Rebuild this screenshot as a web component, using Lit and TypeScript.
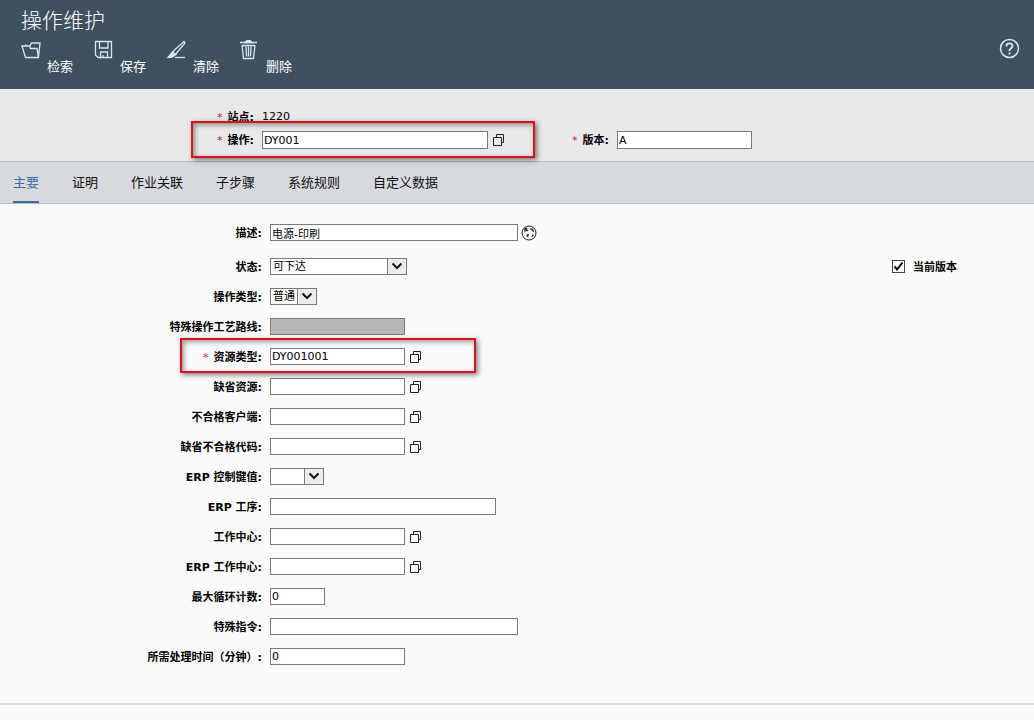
import { LitElement, html, css, svg, nothing, TemplateResult } from "lit";
import { customElement, property } from "lit/decorators.js";

const icons: Record<string, TemplateResult> = {
  open: svg`<path d="M4.500 17.500 1 6h7.500l1 2.500h6.500l1.500 9zM4.500 6 5 4.500M9 6l1.500-3h8.500l-1.500 14"/>`,
  save: svg`<path d="M1.500 1.500h16v16H4l-2.500-2.500zM5.500 1.500v6.500h8.500V1.500M6.500 17.500v-5.500h7v5.500M9 15v2"/>`,
  clear: svg`<path d="M17 1.500 7.500 10 5 13.500l3.500 1L18 3z"/><path d="M5.500 12 9 14.500 5 17 1 17.500z" fill="currentColor"/><path d="M8 17.500h10"/>`,
  remove: svg`<path d="M0 2.500h17M2 5l1.500 13.500h10L15 5M2 5.500h13M6 6.500l.500 10M8.500 6.500v10M11 6.500l-.500 10"/><path d="M5 2.500 7 .500h3l2 2z" fill="currentColor"/>`,
};

const baseText = css`
  .label {
    padding-top: 2px;
    font-weight: bold;
    text-align: right;
    white-space: nowrap;
    line-height: 15px;
  }
  .req {
    color: #c0272d;
    font-weight: normal;
    margin-right: 5px;
  }
`;

@customElement("tool-button")
class ToolButton extends LitElement {
  @property() icon = "";
  @property() label = "";

  static styles = css`
    .tool {
      display: flex;
      gap: 6px;
      height: 34px;
      padding: 0;
      border: 0;
      background: none;
      color: #fff;
      font: 13px/17px "Noto Sans CJK SC", sans-serif;
      cursor: pointer;
    }
    .icon {
      width: 20px;
      height: 20px;
      fill: none;
      stroke: currentColor;
      stroke-width: 1.3;
      color: #d3e6f5;
    }
    .text {
      align-self: flex-end;
    }
  `;

  render() {
    return html`<button class="tool" type="button">
      <svg class="icon" viewBox="0 0 20 20" aria-hidden="true">${icons[this.icon]}</svg>
      <span class="text">${this.label}</span>
    </button>`;
  }
}

@customElement("form-field")
class FormField extends LitElement {
  @property() label = "";
  @property() value = "";
  @property() kind = "input";
  @property() size = "medium";
  @property() suffix = "";
  @property({ type: Boolean }) required = false;
  @property({ type: Boolean }) disabled = false;
  @property({ type: Boolean, reflect: true }) marked = false;

  static styles = [
    baseText,
    css`
      :host {
        display: block;
      }
      .field {
        position: relative;
        display: grid;
        grid-template-columns: var(--label-width, 262px) auto;
        justify-content: start;
        column-gap: 8px;
      }
      .control {
        display: flex;
        align-items: center;
        gap: 5px;
      }
      .box {
        box-sizing: border-box;
        height: var(--control-height, 17px);
        margin: 0;
        padding: 0 1px;
        border: 1px solid #7a7a7a;
        border-radius: 0;
        background: #fff;
        color: #000;
        font: inherit;
        line-height: 15px;
        outline-offset: 0;
      }
      .box:disabled {
        background: #b8b8b8;
        opacity: 1;
      }
      .tiny { width: 47px; }
      .mini { width: 54px; }
      .small { width: 55px; }
      .medium { width: 135px; }
      .large { width: 226px; }
      .wide { width: 248px; }
      .pick {
        display: grid;
      }
      .pick > * {
        grid-area: 1 / 1;
      }
      .select {
        appearance: none;
        width: 100%;
        padding: 0 20px 0 2px;
      }
      .status { width: 137px; }
      .arrow {
        box-sizing: border-box;
        justify-self: end;
        width: 20px;
        height: 17px;
        border: 1px solid #7a7a7a;
        background: #ececec;
        fill: none;
        stroke: #111;
        stroke-width: 2;
        pointer-events: none;
      }
      .aid {
        display: block;
        padding: 0;
        border: 0;
        background: none;
        cursor: pointer;
      }
      .glyph {
        display: block;
        fill: none;
        stroke: #222;
      }
      .globe {
        margin-left: -2px;
      }
      .frame {
        position: absolute;
        inset: var(--frame-inset, -10px auto -8px 180px);
        width: var(--frame-width, 292px);
        border: 2px solid #d8141a;
        box-shadow: 2px 2px 5px rgba(0, 0, 0, 0.5), inset 2px 2px 5px rgba(0, 0, 0, 0.4);
        pointer-events: none;
      }
    `,
  ];

  private renderControl() {
    if (this.kind === "text") return html`<output id="c">${this.value}</output>`;
    if (this.kind === "select")
      return html`<span class="pick ${this.size}">
        <select id="c" class="box select"><option>${this.value}</option></select>
        <svg class="arrow" viewBox="0 0 18 15" aria-hidden="true"><path d="M4.500 4.500 9 9l4.500-4.500" /></svg>
      </span>`;
    return html`<input id="c" class="box ${this.size}" .value=${this.value} ?disabled=${this.disabled} />`;
  }

  private renderSuffix() {
    if (this.suffix === "lookup")
      return html`<button class="aid" type="button" aria-label="${this.label}">
        <svg class="glyph" width="12" height="12" viewBox="0 0 12 12">
          <path d="M.5 3.500h8v8h-8zM3.500 3.500v-3h7v8h-2" />
        </svg>
      </button>`;
    if (this.suffix === "globe")
      return html`<button class="aid globe" type="button" aria-label="${this.label}">
        <svg class="glyph" width="16" height="16" viewBox="0 0 16 16">
          <circle cx="8" cy="8" r="7" />
          <path d="M3 4l2-1.500 1.500.500L6 4.500l1.500 1L6 6.500 5 6 3.500 7zM9.500 3l2 .500 2 3-1.500.500-1-1.500-1.500-.500zM6 9l2 .500-.500 2-1.500 1-.500-2zM11 9.500l2 .500-1.500 2-1-.500z" fill="#333" stroke="none" />
        </svg>
      </button>`;
    return nothing;
  }

  render() {
    return html`<div class="field">
      <label class="label" for="c">${this.required ? html`<span class="req">*</span>` : nothing}${this.label}:</label>
      <div class="control">${this.renderControl()}${this.renderSuffix()}</div>
      ${this.marked ? html`<div class="frame"></div>` : nothing}
    </div>`;
  }
}

interface Field {
  label: string;
  value?: string;
  kind?: string;
  size?: string;
  suffix?: string;
  required?: boolean;
  disabled?: boolean;
  marked?: boolean;
}

const tools = [
  ["open", "检索"],
  ["save", "保存"],
  ["clear", "清除"],
  ["remove", "删除"],
];

const tabs = ["主要", "证明", "作业关联", "子步骤", "系统规则", "自定义数据"];

const fields: Field[] = [
  { label: "操作类型", value: "普通", kind: "select", size: "tiny" },
  { label: "特殊操作工艺路线", disabled: true },
  { label: "资源类型", value: "DY001001", suffix: "lookup", required: true, marked: true },
  { label: "缺省资源", suffix: "lookup" },
  { label: "不合格客户端", suffix: "lookup" },
  { label: "缺省不合格代码", suffix: "lookup" },
  { label: "ERP 控制键值", kind: "select", size: "mini" },
  { label: "ERP 工序", size: "large" },
  { label: "工作中心", suffix: "lookup" },
  { label: "ERP 工作中心", suffix: "lookup" },
  { label: "最大循环计数", value: "0", size: "small" },
  { label: "特殊指令", size: "wide" },
  { label: "所需处理时间（分钟）", value: "0" },
];

@customElement("app-root")
class AppRoot extends LitElement {
  static styles = [
    baseText,
    css`
      :host {
        display: block;
        min-height: 100vh;
        background: #fafafa;
        color: #000;
        font: 11px/17px "DejaVu Sans", "Noto Sans CJK SC", sans-serif;
      }
      .top {
        display: flex;
        justify-content: space-between;
        align-items: center;
        padding: 7px 14px 15px 21px;
        background: #3f5161;
        color: #fff;
      }
      .title {
        margin: 0 0 9px;
        font: 21px/24px "Noto Sans CJK SC", sans-serif;
        font-weight: 300;
      }
      .tools {
        display: flex;
        gap: 21px;
      }
      .help {
        margin-top: 16px;
        padding: 0;
        border: 0;
        background: none;
        color: #d9e8f4;
        cursor: pointer;
      }
      .help-icon {
        display: block;
        fill: none;
        stroke: currentColor;
        stroke-width: 1.5;
      }
      .key {
        --label-width: 254px;
        --control-height: 18px;
        --frame-inset: -10px auto -9px 191px;
        --frame-width: 340px;
        display: grid;
        grid-template-columns: 572px auto;
        justify-content: start;
        row-gap: 6px;
        padding: 19px 0 12px;
        border-bottom: 1px solid #b3bec4;
        background: #e9e9e9;
      }
      .site {
        grid-column: 1 / -1;
      }
      .revision {
        --label-width: 37px;
      }
      .tabs {
        display: flex;
        gap: 33px;
        padding: 0 13px;
        border-bottom: 1px solid #b5bec4;
        background: #d6dade;
      }
      .tab {
        padding: 10px 0 9px;
        border-bottom: 2px solid transparent;
        color: #111;
        font: 13px/20px "Noto Sans CJK SC", sans-serif;
        text-decoration: none;
      }
      .tab.active {
        color: #3c6b9e;
        border-color: #3c6b9e;
      }
      .body {
        display: grid;
        row-gap: 13px;
        padding: 20px 0 38px;
        border-bottom: 2px solid #dcdcdc;
      }
      .first {
        margin-bottom: 4px;
      }
      .pair {
        display: flex;
        justify-content: space-between;
        padding-right: 77px;
      }
      .current {
        display: flex;
        align-items: center;
        gap: 8px;
      }
      .tick {
        display: grid;
      }
      .tick > * {
        grid-area: 1 / 1;
      }
      .check {
        appearance: none;
        width: 13px;
        height: 13px;
        margin: 0;
        border: 1px solid #444;
        background: #fff;
      }
      .mark {
        width: 13px;
        height: 13px;
        fill: none;
        stroke: #000;
        stroke-width: 2;
        pointer-events: none;
        visibility: hidden;
      }
      .check:checked + .mark {
        visibility: visible;
      }
    `,
  ];

  private field(f: Field, cls = "") {
    return html`<form-field
      class=${cls}
      .label=${f.label}
      .value=${f.value ?? ""}
      .kind=${f.kind ?? "input"}
      .size=${f.size ?? "medium"}
      .suffix=${f.suffix ?? ""}
      .required=${!!f.required}
      .disabled=${!!f.disabled}
      .marked=${!!f.marked}
    ></form-field>`;
  }

  render() {
    return html`
      <header class="top">
        <div>
          <h1 class="title">操作维护</h1>
          <div class="tools">
            ${tools.map(([icon, label]) => html`<tool-button .icon=${icon} .label=${label}></tool-button>`)}
          </div>
        </div>
        <button class="help" type="button" aria-label="?">
          <svg class="help-icon" width="21" height="21" viewBox="0 0 21 21">
            <circle cx="10.5" cy="10.5" r="9" />
            <path d="M7.500 8.500c0-4 6-4 6-.500 0 2-3 2.500-3 4.500v.500M10.500 14.500v2" stroke-width="1.800" />
          </svg>
        </button>
      </header>
      <section class="key">
        ${this.field({ label: "站点", value: "1220", kind: "text", required: true }, "site")}
        ${this.field({ label: "操作", value: "DY001", size: "large", suffix: "lookup", required: true, marked: true })}
        ${this.field({ label: "版本", value: "A", required: true }, "revision")}
      </section>
      <nav class="tabs">
        ${tabs.map((t, i) => html`<a class="tab ${i === 0 ? "active" : ""}" href="#">${t}</a>`)}
      </nav>
      <main class="body">
        ${this.field({ label: "描述", value: "电源-印刷", size: "wide", suffix: "globe" }, "first")}
        <div class="pair">
          ${this.field({ label: "状态", value: "可下达", kind: "select", size: "status" })}
          <label class="current">
            <span class="tick">
              <input class="check" type="checkbox" checked />
              <svg class="mark" viewBox="0 0 13 13" aria-hidden="true"><path d="M2.500 6.500 5 9.500l5.500-7" /></svg>
            </span>
            <span class="label">当前版本</span>
          </label>
        </div>
        ${fields.map((f) => this.field(f))}
      </main>
    `;
  }
}
